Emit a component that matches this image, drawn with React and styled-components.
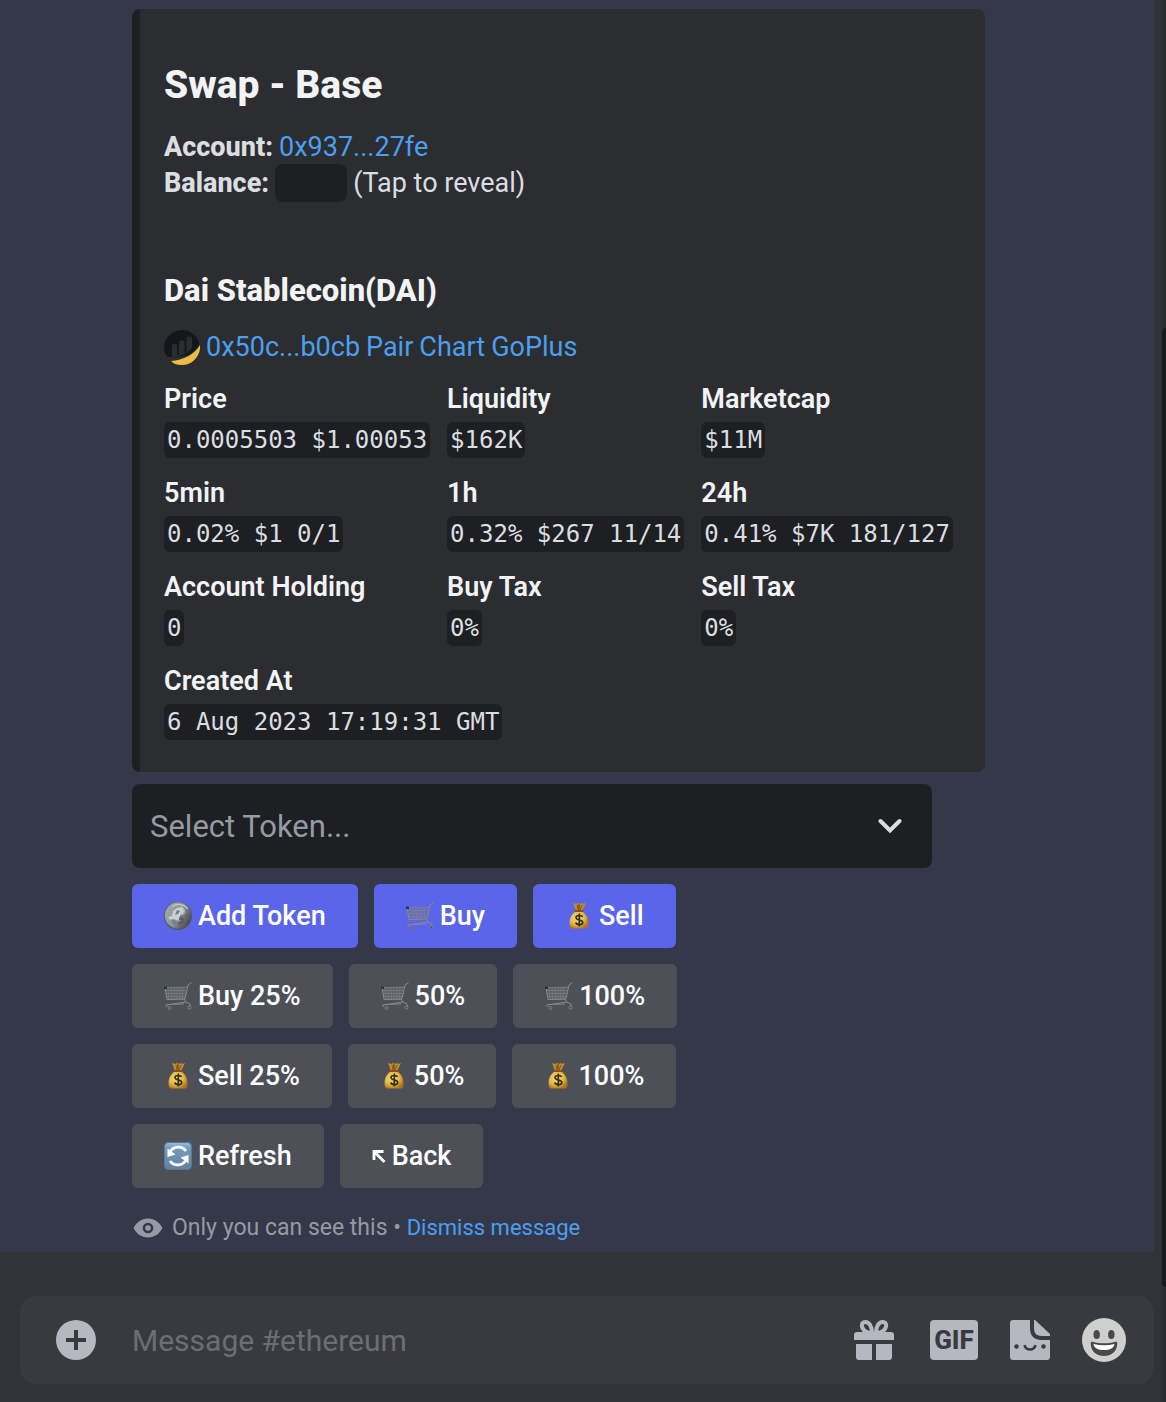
import React from "react";
import styled, { createGlobalStyle } from "styled-components";

const GlobalStyle = createGlobalStyle`
  *, *::before, *::after { box-sizing: border-box; }
  body { margin: 0; background: #323338; }
  body, button, input, select { font-family: Roboto, "Liberation Sans", sans-serif; }
  h1, h2, p, dl, dd { margin: 0; }
`;

const Screen = styled.div`
  display: flex;
  min-height: 100vh;
  background: #323338;
  color: #dbdee1;
`;

const Main = styled.main`
  flex: 1;
  min-width: 0;
  display: flex;
  flex-direction: column;
`;

const Rail = styled.div`
  width: 4px;
  display: flex;
  padding: 328px 0 115px;
  background: #2c2d31;
`;

const Thumb = styled.div`
  flex: 1;
  background: #1a1b1e;
  border-radius: 4px 0 0 4px;
`;

const Message = styled.article`
  flex: 1;
  display: flex;
  flex-direction: column;
  align-items: flex-start;
  margin-right: 8px;
  padding: 9px 32px 6px 132px;
  background: #353849;
`;

const Embed = styled.section`
  padding: 48px 32px 32px 24px;
  border-left: 8px solid #1e1f22;
  border-radius: 8px;
  background: #2c2d31;
`;

const Title = styled.h1`
  color: #f2f3f5;
  font-size: 39px;
  line-height: 56px;
  font-weight: 800;
  margin-bottom: 16px;
`;

const Subtitle = styled.h2`
  margin: 68px 0 16px;
  color: #f2f3f5;
  font-size: 31px;
  line-height: 44px;
  font-weight: 800;
`;

const Line = styled.p`
  display: flex;
  align-items: center;
  gap: 6px;
  height: 36px;
  font-size: 27px;
  line-height: 36px;
  white-space: nowrap;
  strong { font-weight: 800; }
`;

const Link = styled.a`
  color: #4a9ff0;
  text-decoration: none;
  &:hover { text-decoration: underline; }
`;

const Spoiler = styled.button`
  width: 72px;
  height: 38px;
  padding: 0;
  border: 0;
  border-radius: 8px;
  background: #1e1f22;
  cursor: pointer;
`;

const Fields = styled.dl`
  display: grid;
  grid-template-columns: repeat(3, max-content);
  gap: 17px;
  margin-top: 16px;
`;

const Field = styled.div`
  grid-column: ${(p) => (p.$wide ? "1 / -1" : "auto")};
  display: flex;
  flex-direction: column;
  align-items: flex-start;
  gap: 5px;
`;

const FieldName = styled.dt`
  color: #f2f3f5;
  font-size: 27px;
  line-height: 36px;
  font-weight: 600;
`;

const FieldValue = styled.dd`
  padding: 0 3px;
  border-radius: 6px;
  background: #1e1f22;
  font-family: "DejaVu Sans Mono", monospace;
  font-size: 24px;
  line-height: 36px;
  white-space: pre;
`;

const SelectBox = styled.div`
  display: grid;
  align-items: center;
  width: 100%;
  max-width: 800px;
  margin: 12px 0 16px;
  & > * { grid-area: 1 / 1; }
  & > svg { justify-self: end; margin-right: 30px; pointer-events: none; }
`;

const TokenSelect = styled.select`
  appearance: none;
  width: 100%;
  height: 84px;
  padding: 0 18px;
  border: 0;
  border-radius: 8px;
  background: #1e1f22;
  color: #949ba4;
  font-size: 31px;
`;

const Actions = styled.div`
  display: flex;
  flex-direction: column;
  gap: 16px;
`;

const ActionRow = styled.div`
  display: flex;
  gap: 16px;
`;

const ActionButton = styled.button`
  display: flex;
  align-items: center;
  gap: 6px;
  height: 64px;
  padding: 0 32px;
  border: 0;
  border-radius: 6px;
  background: ${(p) => (p.$primary ? "#5a65ea" : "#4e5058")};
  color: #fff;
  font-size: 27px;
  font-weight: 500;
  white-space: nowrap;
  cursor: pointer;
`;

const Notice = styled.footer`
  display: flex;
  align-items: center;
  gap: 8px;
  margin-top: 22px;
  color: #949ba4;
  font-size: 23px;
  line-height: 36px;
`;

const DismissLink = styled(Link)`
  font-size: 22px;
`;

const Composer = styled.form`
  display: flex;
  align-items: center;
  height: 88px;
  margin: 44px 8px 18px 20px;
  padding: 0 28px 0 36px;
  border-radius: 16px;
  background: #393a3f;
`;

const MessageInput = styled.input`
  flex: 1;
  min-width: 0;
  height: 60px;
  margin: 0 36px;
  padding: 0;
  border: 0;
  outline: 0;
  background: transparent;
  color: #dbdee1;
  font-size: 30px;
  &::placeholder { color: #6c6e75; opacity: 1; }
`;

const Tools = styled.div`
  display: flex;
  align-items: center;
  gap: 32px;
`;

const IconButton = styled.button`
  display: flex;
  align-items: center;
  justify-content: center;
  min-width: 40px;
  height: 44px;
  padding: 0;
  border: 0;
  background: none;
  color: #b5b8c1;
  cursor: pointer;
`;

const GifBadge = styled.span`
  width: 48px;
  margin-left: 4px;
  border-radius: 4px;
  background: #b5b8c1;
  color: #393a3f;
  font-size: 26px;
  line-height: 40px;
  font-weight: 800;
  text-align: center;
`;

const TokenLogo = () => (
  <svg width="36" height="36" viewBox="0 0 36 36" aria-hidden="true">
    <path d="M7 28C2 29 0 23 0 18a18 18 0 0 1 35.500-3C31 24 21 29 7 28Z" fill="#14161b" />
    <path d="M8 28V17q0-2 2-2h1q2 0 2 2v9l2-.6V13.500q0-2 2-2h1.500q2 0 2 2V24l2-1.500V9.500q0-2 2-2h1.500q2 0 2 2V19C22 25 16 28 8 29Z" fill="#2c2d31" />
    <path d="M7 32C19 31.500 31 25 36 16c1 10-7 20-18 20-5 0-8-1-11-4Z" fill="#ecbd42" />
  </svg>
);

const CoinIcon = () => (
  <svg width="28" height="28" viewBox="0 0 28 28" aria-hidden="true">
    <defs>
      <linearGradient id="coin" x1="0" y1=".2" x2="1" y2=".8">
        <stop offset="0" stopColor="#a3abad" />
        <stop offset=".5" stopColor="#8b9294" />
        <stop offset="1" stopColor="#3d4144" />
      </linearGradient>
    </defs>
    <circle cx="14" cy="14" r="14" fill="#53585b" />
    <circle cx="14" cy="13.500" r="13.200" fill="url(#coin)" />
    <path d="M8 4.500C13 1 20 2 24 7" fill="none" stroke="#c4cbcd" strokeWidth="1.200" />
    <path d="m9 9 4-3 5-1 3 3-2 4-3 1 1 3-3 3-4-2-4 1-2-3 4-1Z" fill="#c9d0d2" />
    <path d="m13 8 3 1-2 3-3 1ZM7 17l4 2 2 4-4-2Z" fill="#747d80" />
    <path d="m16 14 4 3-1 4-4 2-1-3Z" fill="#565d60" />
    <path d="m18 7 3 3-2 3M14 20l3-2" fill="none" stroke="#aab2b4" />
  </svg>
);

const CartIcon = () => (
  <svg width="28" height="28" viewBox="0 0 28 28" fill="none" aria-hidden="true">
    <path d="M1 5.500 23 4l-2 13-18 .5Z" fill="#77777b" fillOpacity=".35" />
    <path d="M1 5.500h22M1.500 8.500h21M2 11.500h20M2.500 14.500h19M3 17.500l18-.5M4 5.500l1 12M7 5.500l.8 12M10 5.500l.5 12M13 5.500v12M16 5.500l-.4 12M19 5.500l-1 12" stroke="#858589" strokeWidth=".6" />
    <path d="M27.500.7 24 3l-3 14-18 .5L1 5.500M20 17l2 3 4 2v3M22 20 2 23v2M3 22.500l17-.5" stroke="#89888c" strokeWidth="1" strokeLinejoin="round" />
    <circle cx="5.500" cy="26" r="1.500" fill="#50474a" stroke="#9a8e8b" strokeWidth=".8" />
    <circle cx="25.500" cy="25.500" r="1.500" fill="#50474a" stroke="#9a8e8b" strokeWidth=".8" />
    <rect y="4.500" width="3" height="2.500" rx=".5" fill="#173954" />
  </svg>
);

const BagIcon = () => (
  <svg width="28" height="28" viewBox="0 0 28 28" aria-hidden="true">
    <defs>
      <radialGradient id="bag" cx=".4" cy=".4" r=".65">
        <stop offset="0" stopColor="#f6d878" />
        <stop offset=".6" stopColor="#e5b843" />
        <stop offset="1" stopColor="#a9741d" />
      </radialGradient>
    </defs>
    <path d="m8 1 3 1 2-1 2 1 2-1 1 1 3-1-4 8h-6Z" fill="#c08b2e" />
    <path d="m12 3 1 5 1-6 1 6 2-5" fill="none" stroke="#8a5818" />
    <path d="M11 9h6c4 3 6.500 7 6.500 12 0 4-1 5.500-3 5.500h-13c-2 0-3-1.500-3-5.500 0-5 2.500-9 6.500-12Z" fill="url(#bag)" />
    <path d="M10.500 9h7" stroke="#8c4f16" strokeWidth="2" strokeLinecap="round" />
    <path d="M17.500 15c-.6-2-6.500-2-6.500.5 0 3.300 6.800 1.700 6.800 5 0 2.800-6.500 2.800-7 0M14.300 11.500v13" fill="none" stroke="#302c22" strokeWidth="1.600" />
  </svg>
);

const RefreshIcon = () => (
  <svg width="28" height="28" viewBox="0 0 28 28" aria-hidden="true">
    <defs>
      <linearGradient id="tile" x1="0" y1="0" x2="0" y2="1">
        <stop offset="0" stopColor="#9bbfdb" />
        <stop offset=".2" stopColor="#739cc0" />
        <stop offset="1" stopColor="#61809e" />
      </linearGradient>
    </defs>
    <rect x=".5" y=".5" width="27" height="27" rx="4" fill="url(#tile)" stroke="#587995" />
    <path d="M5.500 11c3-7 12-8 16.500-2M22.500 17c-3 7-12 8-16.500 2" fill="none" stroke="#fff" strokeWidth="2.800" />
    <path d="M3.500 6.500V15l8-2.500ZM24.500 21.500V13l-8 2.500Z" fill="#fff" />
  </svg>
);

const BackIcon = () => (
  <svg width="14" height="28" viewBox="0 0 14 28" fill="none" stroke="#fff" strokeWidth="2.800" aria-hidden="true">
    <path d="M2 18V9.500h9.500M2.500 10 12.500 20" />
  </svg>
);

const ChevronIcon = () => (
  <svg width="24" height="16" viewBox="0 0 24 16" fill="none" stroke="#dbdee1" strokeWidth="4" strokeLinecap="round" aria-hidden="true">
    <path d="m2.500 3 9.500 9.500L21.500 3" />
  </svg>
);

const EyeIcon = () => (
  <svg width="32" height="24" viewBox="0 0 32 24" aria-hidden="true">
    <path fillRule="evenodd" fill="#949ba4" d="M16 2.500C9 2.500 4 7 1.500 12 4 17 9 21.500 16 21.500s12-4.500 14.500-9.500C28 7 23 2.500 16 2.500Zm0 4.200a5.300 5.300 0 1 1 0 10.600 5.300 5.300 0 0 1 0-10.600Z" />
    <circle cx="16" cy="12" r="2.800" fill="#949ba4" />
  </svg>
);

const PlusIcon = () => (
  <svg width="40" height="40" viewBox="0 0 40 40" aria-hidden="true">
    <circle cx="20" cy="20" r="20" fill="#b5b8c1" />
    <path d="M20 10v20M10 20h20" stroke="#393a3f" strokeWidth="4" />
  </svg>
);

const GiftIcon = () => (
  <svg width="40" height="40" viewBox="0 0 40 40" fill="#b5b8c1" aria-hidden="true">
    <path d="M3 12h34a3 3 0 0 1 3 3v5H0v-5a3 3 0 0 1 3-3ZM2 24h16v16H5a3 3 0 0 1-3-3ZM22 24h16v13a3 3 0 0 1-3 3H22Z" />
    <path d="M18 13C18 6 15 2 11.500 2 8 2 7 5 8.500 8c1.200 2.500 4 5 9.500 5ZM22 13c0-7 3-11 6.500-11C32 2 33 5 31.500 8c-1.200 2.500-4 5-9.500 5Z" fill="none" stroke="#b5b8c1" strokeWidth="4" />
  </svg>
);

const StickerIcon = () => (
  <svg width="40" height="40" viewBox="0 0 40 40" fill="#b5b8c1" aria-hidden="true">
    <path d="M3 0h17v8c0 8 4 12 12 12h8v17a3 3 0 0 1-3 3H3a3 3 0 0 1-3-3V3a3 3 0 0 1 3-3Z" />
    <path d="M24 0h1l15 14v2h-8c-6 0-8-3-8-8Z" />
    <circle cx="6.500" cy="26.500" r="2.200" fill="#393a3f" />
    <circle cx="33.500" cy="26.500" r="2.200" fill="#393a3f" />
    <path d="M14.500 25c1.500 6 9.500 6 11 0" fill="none" stroke="#393a3f" strokeWidth="2.600" />
  </svg>
);

const SmileIcon = () => (
  <svg width="44" height="44" viewBox="0 0 44 44" aria-hidden="true">
    <circle cx="22" cy="22" r="22" fill="#cfcfcf" />
    <ellipse cx="14.700" cy="16.500" rx="3.200" ry="4.600" fill="#49494a" />
    <ellipse cx="29.300" cy="16.500" rx="3.200" ry="4.600" fill="#49494a" />
    <path d="M8.700 25c0-1.200 1-1.500 2-1.200 7 2 15.600 2 22.600 0 1-.3 2 0 2 1.200C35.300 33 30 38 22 38S8.700 33 8.700 25Z" fill="#49494a" />
    <path d="M11.500 26c7 1.700 14 1.700 21 0C32 30 28 32 22 32s-10-2-10.500-6Z" fill="#fff" />
  </svg>
);

const ICONS = { coin: CoinIcon, cart: CartIcon, bag: BagIcon, refresh: RefreshIcon, back: BackIcon };

const FIELDS = [
  ["Price", "0.0005503 $1.00053"],
  ["Liquidity", "$162K"],
  ["Marketcap", "$11M"],
  ["5min", "0.02% $1 0/1"],
  ["1h", "0.32% $267 11/14"],
  ["24h", "0.41% $7K 181/127"],
  ["Account Holding", "0"],
  ["Buy Tax", "0%"],
  ["Sell Tax", "0%"],
  ["Created At", "6 Aug 2023 17:19:31 GMT", true],
];

const ACTIONS = [
  [["coin", "Add Token", true], ["cart", "Buy", true], ["bag", "Sell", true]],
  [["cart", "Buy 25%"], ["cart", "50%"], ["cart", "100%"]],
  [["bag", "Sell 25%"], ["bag", "50%"], ["bag", "100%"]],
  [["refresh", "Refresh"], ["back", "Back"]],
];

export default function App() {
  return (
    <>
      <GlobalStyle />
      <Screen>
        <Main>
          <Message>
            <Embed>
              <Title>Swap - Base</Title>
              <Line><strong>Account:</strong><Link href="#account">0x937...27fe</Link></Line>
              <Line>
                <strong>Balance:</strong>
                <Spoiler type="button" aria-label="Reveal balance" />
                <span>(Tap to reveal)</span>
              </Line>
              <Subtitle>Dai Stablecoin(DAI)</Subtitle>
              <Line>
                <TokenLogo />
                <Link href="#token">0x50c...b0cb</Link>
                <Link href="#pair">Pair</Link>
                <Link href="#chart">Chart</Link>
                <Link href="#goplus">GoPlus</Link>
              </Line>
              <Fields>
                {FIELDS.map(([name, value, wide]) => (
                  <Field key={name} $wide={wide}>
                    <FieldName>{name}</FieldName>
                    <FieldValue>{value}</FieldValue>
                  </Field>
                ))}
              </Fields>
            </Embed>
            <SelectBox>
              <TokenSelect aria-label="Select Token" defaultValue="">
                <option value="">Select Token...</option>
                <option value="dai">DAI</option>
              </TokenSelect>
              <ChevronIcon />
            </SelectBox>
            <Actions>
              {ACTIONS.map((row, i) => (
                <ActionRow key={i}>
                  {row.map(([icon, label, primary]) => {
                    const Icon = ICONS[icon];
                    return (
                      <ActionButton key={label} type="button" $primary={primary}>
                        <Icon />
                        <span>{label}</span>
                      </ActionButton>
                    );
                  })}
                </ActionRow>
              ))}
            </Actions>
            <Notice>
              <EyeIcon />
              <span>Only you can see this • <DismissLink href="#dismiss">Dismiss message</DismissLink></span>
            </Notice>
          </Message>
          <Composer onSubmit={(e) => e.preventDefault()}>
            <IconButton type="button" aria-label="Add attachment"><PlusIcon /></IconButton>
            <MessageInput aria-label="Message #ethereum" placeholder="Message #ethereum" />
            <Tools>
              <IconButton type="button" aria-label="Send a gift"><GiftIcon /></IconButton>
              <IconButton type="button"><GifBadge>GIF</GifBadge></IconButton>
              <IconButton type="button" aria-label="Open stickers"><StickerIcon /></IconButton>
              <IconButton type="button" aria-label="Pick an emoji"><SmileIcon /></IconButton>
            </Tools>
          </Composer>
        </Main>
        <Rail><Thumb /></Rail>
      </Screen>
    </>
  );
}
